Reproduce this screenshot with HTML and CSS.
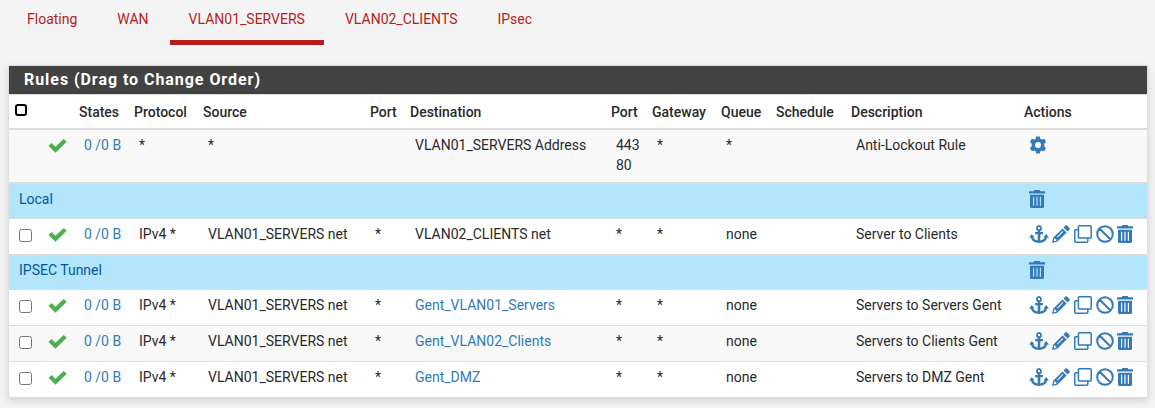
FILE: index.html
```html
<!DOCTYPE html>
<html lang="en">
<head>
<meta charset="utf-8">
<title>Firewall Rules</title>
<link rel="stylesheet" href="styles.css">
</head>
<body>
<svg class="defs" width="0" height="0">
  <symbol id="check" viewBox="0 0 18 14"><path d="M0 7 L3 4 L7 7.800 L15.200 0 L18.200 2.800 L7 13.700Z"/></symbol>
  <symbol id="gear" viewBox="0 0 17 18"><path fill-rule="evenodd" d="M6.7 0.5h3.6l.5 2.200 1.5.9 2.4-.8 1.8 3.1-1.7 1.800v2.600l1.700 1.800-1.8 3.1-2.4-.8-1.5.9-.5 2.2H6.700l-.5-2.2-1.500-.9-2.400.8-1.800-3.100 1.700-1.800V7.700L.5 5.900l1.800-3.100 2.400.8 1.500-.9zM8.500 6a3 3 0 1 0 0 6 3 3 0 0 0 0-6z"/></symbol>
  <symbol id="trash" viewBox="0 0 16 18"><path fill-rule="evenodd" d="M0 1.200h4.700L5.300 0h5.400l.6 1.200H16V3.400H0zM1 4.700h14V16.500q0 1.500-1.500 1.500h-11Q1 18 1 16.500zM4 6.800v9h1.200v-9zM7.400 6.800v9h1.200v-9zM10.800 6.800v9H12v-9z"/></symbol>
  <symbol id="anchor" viewBox="0 0 20 18"><path fill-rule="evenodd" d="M10 0a3.200 3.200 0 0 1 1.300 6V7h2.600v2.200h-2.600v6.200q3.700-.5 4.500-3.100l-1.500.5 2.900-3.900 2.800 3.900-1.800-.3Q16.800 17.700 10 18 3.200 17.700 1.800 12.500L0 12.800l2.800-3.900 2.900 3.900-1.500-.5q.8 2.600 4.500 3.100V9.200H6.100V7h2.600V6A3.200 3.200 0 0 1 10 0zM10 1.900a1.200 1.200 0 1 0 0 2.400 1.200 1.200 0 0 0 0-2.400z"/></symbol>
  <symbol id="pencil" viewBox="0 0 18 18"><path fill-rule="evenodd" d="M13.300.600q.9-.9 1.800 0l2.300 2.300q.9.900 0 1.800l-1.800 1.800-4.100-4.100zM10.500 3.400l4.100 4.100L5.300 16.800 0 18l1.200-5.300zM2.300 13.600l-.5 2 .6.600 2-.5v-1.200H3.500v-.9zM4.800 11.900l.7.700 5.800-5.800-.7-.7z"/></symbol>
  <symbol id="clone" viewBox="0 0 18 18"><path class="line" d="M5.300.8h11q.9 0 .9.900v10.500q0 .9-.9.900h-11q-.9 0-.9-.9V1.700q0-.9.900-.9zM4.400 4.700H1.700q-.9 0-.9.900v10.700q0 .9.900.9h11.200q.9 0 .9-.9v-3.200"/></symbol>
  <symbol id="ban" viewBox="0 0 18 18"><path class="line thick" d="M9 1.200a7.800 7.800 0 1 0 0 15.600A7.800 7.800 0 0 0 9 1.200zM3.500 3.500l11 11"/></symbol>
</svg>
<nav class="tabs">
  <a class="tab">Floating</a><a class="tab">WAN</a><a class="tab active">VLAN01_SERVERS</a><a class="tab">VLAN02_CLIENTS</a><a class="tab">IPsec</a>
</nav>
<section class="panel">
  <h2 class="title">Rules (Drag to Change Order)</h2>
  <div class="row head"><span><i class="box bold"></i></span><span></span><span>States</span><span>Protocol</span><span>Source</span><span>Port</span><span>Destination</span><span>Port</span><span>Gateway</span><span>Queue</span><span>Schedule</span><span>Description</span><span>Actions</span></div>
  <div class="row lockout odd"><span></span><span class="ok"><svg class="check"><use href="#check"/></svg></span><span><a>0 /0 B</a></span><span>*</span><span>*</span><span></span><span>VLAN01_SERVERS Address</span><span>443<br>80</span><span>*</span><span>*</span><span></span><span>Anti-Lockout Rule</span><span class="actions"><svg class="gear"><use href="#gear"/></svg></span></div>
  <div class="row group"><span class="name">Local</span><span class="actions"><svg class="trash"><use href="#trash"/></svg></span></div>
  <div class="row"><span><i class="box"></i></span><span class="ok"><svg class="check"><use href="#check"/></svg></span><span><a>0 /0 B</a></span><span>IPv4 *</span><span>VLAN01_SERVERS net</span><span>*</span><span>VLAN02_CLIENTS net</span><span>*</span><span>*</span><span>none</span><span></span><span>Server to Clients</span><span class="actions"><svg class="anchor"><use href="#anchor"/></svg><svg class="pencil"><use href="#pencil"/></svg><svg class="clone"><use href="#clone"/></svg><svg class="ban"><use href="#ban"/></svg><svg class="trash"><use href="#trash"/></svg></span></div>
  <div class="row group"><span class="name">IPSEC Tunnel</span><span class="actions"><svg class="trash"><use href="#trash"/></svg></span></div>
  <div class="row"><span><i class="box"></i></span><span class="ok"><svg class="check"><use href="#check"/></svg></span><span><a>0 /0 B</a></span><span>IPv4 *</span><span>VLAN01_SERVERS net</span><span>*</span><span><a>Gent_VLAN01_Servers</a></span><span>*</span><span>*</span><span>none</span><span></span><span>Servers to Servers Gent</span><span class="actions"><svg class="anchor"><use href="#anchor"/></svg><svg class="pencil"><use href="#pencil"/></svg><svg class="clone"><use href="#clone"/></svg><svg class="ban"><use href="#ban"/></svg><svg class="trash"><use href="#trash"/></svg></span></div>
  <div class="row odd"><span><i class="box"></i></span><span class="ok"><svg class="check"><use href="#check"/></svg></span><span><a>0 /0 B</a></span><span>IPv4 *</span><span>VLAN01_SERVERS net</span><span>*</span><span><a>Gent_VLAN02_Clients</a></span><span>*</span><span>*</span><span>none</span><span></span><span>Servers to Clients Gent</span><span class="actions"><svg class="anchor"><use href="#anchor"/></svg><svg class="pencil"><use href="#pencil"/></svg><svg class="clone"><use href="#clone"/></svg><svg class="ban"><use href="#ban"/></svg><svg class="trash"><use href="#trash"/></svg></span></div>
  <div class="row"><span><i class="box"></i></span><span class="ok"><svg class="check"><use href="#check"/></svg></span><span><a>0 /0 B</a></span><span>IPv4 *</span><span>VLAN01_SERVERS net</span><span>*</span><span><a>Gent_DMZ</a></span><span>*</span><span>*</span><span>none</span><span></span><span>Servers to DMZ Gent</span><span class="actions"><svg class="anchor"><use href="#anchor"/></svg><svg class="pencil"><use href="#pencil"/></svg><svg class="clone"><use href="#clone"/></svg><svg class="ban"><use href="#ban"/></svg><svg class="trash"><use href="#trash"/></svg></span></div>
</section>
</body>
</html>
```
FILE: styles.css
```css
* { box-sizing: border-box; }
body { margin: 0; height: 408px; overflow: hidden; background: #f4f4f4; color: #2a2a2a; font: 400 14px/20px Roboto, sans-serif; }
.defs { display: block; }
.tabs { display: flex; height: 45px; padding-left: 8px; }
.tab { padding: 9px 19px 0; margin-right: 2px; color: #b71c1c; border-bottom: 5px solid transparent; white-space: nowrap; }
.tab.active { border-bottom-color: #b71c1c; }
.panel { margin: 20px 7px 0 8px; background: #fff; border: 1px solid #ddd; border-bottom: 0; box-shadow: 0 3px 8px rgba(0,0,0,.14); }
.title { margin: 0; height: 28px; padding-left: 15px; background: #424242; color: #fff; font-size: 16px; line-height: 27px; font-weight: 700; letter-spacing: .95px; }
.row { display: grid; grid-template-columns: 34px 31px 55px 69px 167px 40px 201px 41px 69px 55px 75px 173px 1fr; height: 36px; padding-top: 5px; border-bottom: 1px solid #ddd; white-space: nowrap; }
.row > span { padding-left: 10px; }
.row a { color: #337ab7; }
.head { height: 36px; padding-top: 7px; border-top: 1px solid #ddd; border-bottom-width: 2px; font-weight: 500; }
.head > span { padding-left: 5px; }
.lockout { height: 54px; border-bottom-width: 2px; }
.odd { background: #f9f9f9; }
.row.group { grid-template-columns: 1010px 1fr; height: 35px; background: #b3e5fc; color: #01579b; }
.row.group + .row { height: 36px; }
.row > .ok { padding-left: 5px; }
.box { display: block; width: 13px; height: 13px; margin-top: 5px; border: 1px solid #767676; border-radius: 2.5px; background: #fff; }
.box.bold { width: 12px; height: 12px; margin: 2px 0 0 1px; border: 2px solid #000; border-radius: 3px; }
svg { fill: #337ab7; }
.line { fill: none; stroke: #337ab7; stroke-width: 1.5; }
.thick { stroke-width: 2; }
.actions { display: flex; align-items: flex-start; }
.check { display: block; width: 19px; height: 14px; margin-top: 4px; fill: #4caf50; }
.gear { width: 18px; height: 18px; margin-top: 1px; }
.actions .trash { width: 16px; height: 18px; margin-top: 1px; }
.anchor { width: 20px; height: 18px; margin: 1px 3px 0 0; }
.pencil { width: 18px; height: 18px; margin: 1px 4px 0 0; }
.clone { width: 18px; height: 18px; margin: 1px 4px 0 0; }
.ban { width: 18px; height: 18px; margin: 1px 3px 0 0; }
```
